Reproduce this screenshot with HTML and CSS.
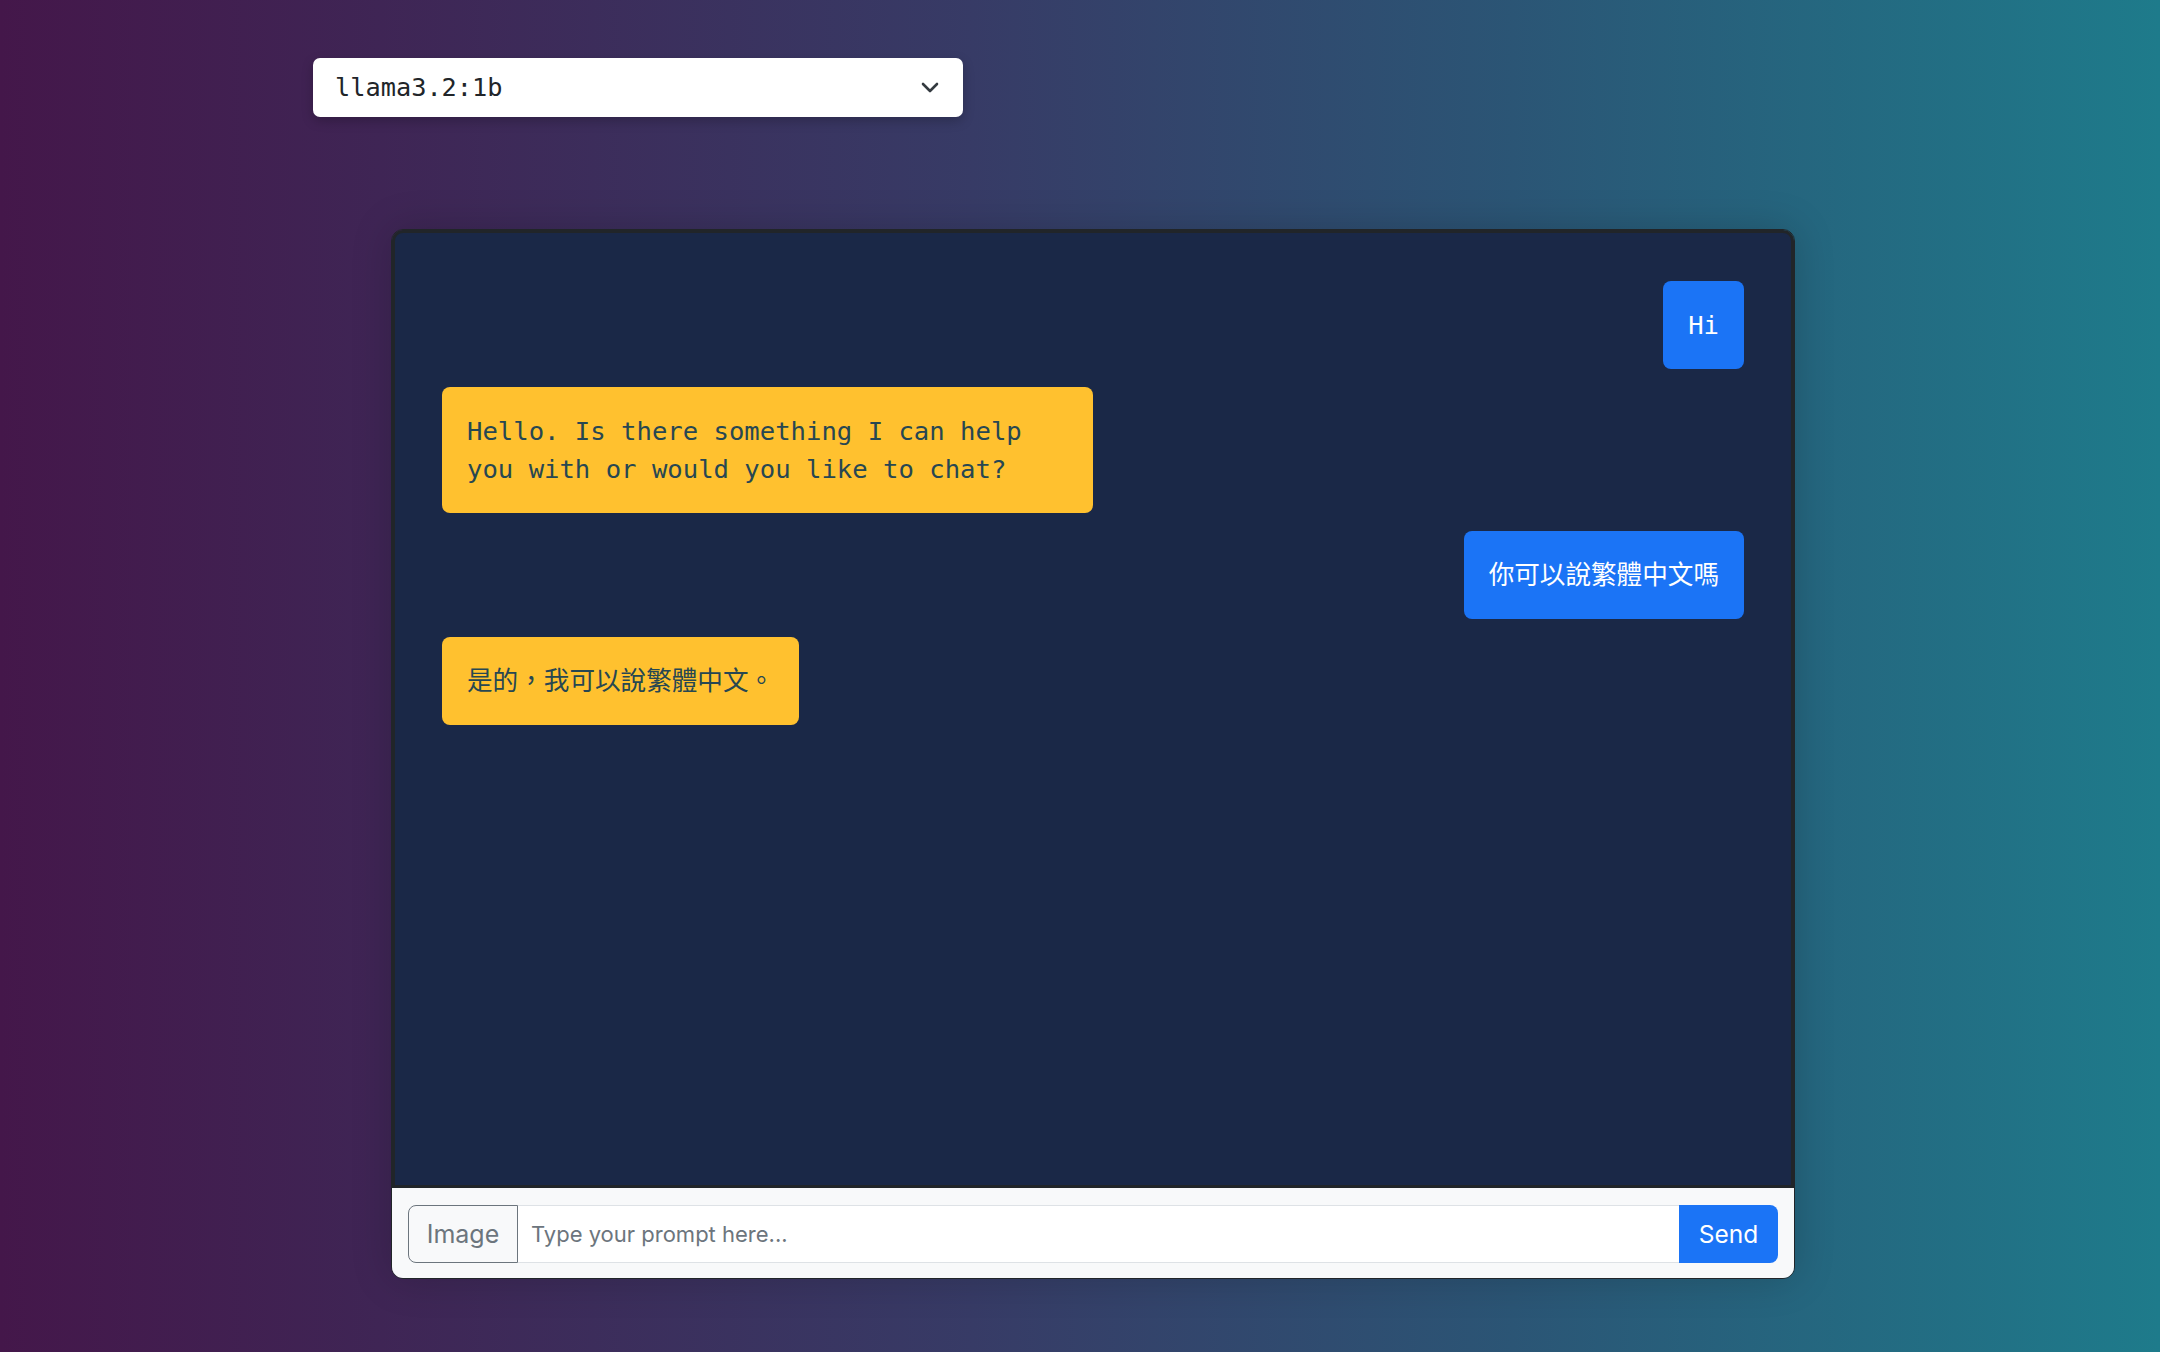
FILE: index.html
```html
<!DOCTYPE html>
<html lang="zh-Hant">
<head>
<meta charset="utf-8">
<title>Chat</title>
<link rel="stylesheet" href="styles.css">
</head>
<body>
<div class="page">
  <div class="model-select">
    <span class="model-name">llama3.2:1b</span>
    <svg class="chevron" width="18" height="12" viewBox="0 0 18 12" aria-hidden="true">
      <path d="M2 2 L9 9 L16 2" fill="none" stroke="#343a40" stroke-width="2.6" stroke-linecap="round" stroke-linejoin="round"/>
    </svg>
  </div>
  <div class="chat-card">
    <div class="messages">
      <div class="msg user">Hi</div>
      <div class="msg bot">Hello. Is there something I can help you with or would you like to chat?</div>
      <div class="msg user">你可以說繁體中文嗎</div>
      <div class="msg bot">是的，我可以說繁體中文。</div>
    </div>
    <div class="composer">
      <div class="input-group">
        <button class="btn-image" type="button">Image</button>
        <input class="prompt" type="text" placeholder="Type your prompt here...">
        <button class="btn-send" type="button">Send</button>
      </div>
    </div>
  </div>
</div>
</body>
</html>
```
FILE: styles.css
```css
* { box-sizing: border-box; }
html, body { margin: 0; padding: 0; }
body {
  min-height: 100vh;
  background: linear-gradient(to right, #44174a 0%, #373b66 45%, #2b5575 70%, #1e7b8b 100%);
  font-family: "Inter", "Noto Sans", sans-serif;
}
.page {
  padding: 58px 0 0 313px;
}
.model-select {
  width: 650px;
  height: 59px;
  background: #ffffff;
  border-radius: 7px;
  display: flex;
  align-items: center;
  justify-content: space-between;
  padding: 0 24px 0 22px;
  box-shadow: 0 4px 12px rgba(0, 0, 0, 0.22);
}
.model-name {
  font-family: "DejaVu Sans Mono", monospace;
  font-size: 25.3px;
  color: #212529;
}
.chevron { display: block; }
.chat-card {
  margin: 112px 0 0 78px;
  width: 1404px;
  height: 1050px;
  border-radius: 12px;
  border: 1px solid #212529;
  overflow: hidden;
  display: flex;
  flex-direction: column;
  box-shadow: 0 0 40px rgba(0, 0, 0, 0.18);
}
.messages {
  flex: 1;
  background: #1a2847;
  border: 3px solid #212529;
  border-radius: 11px 11px 0 0;
  padding: 48px 47px;
  display: flex;
  flex-direction: column;
  gap: 18px;
}
.msg {
  max-width: 50%;
  padding: 25px 25px;
  border-radius: 8px;
  font-family: "DejaVu Sans Mono", "Noto Sans CJK TC", monospace;
  font-size: 25.6px;
  line-height: 38px;
}
.msg.user {
  align-self: flex-end;
  background: #1b74f6;
  color: #ffffff;
}
.msg.bot {
  align-self: flex-start;
  background: #ffc12f;
  color: #274752;
}
.composer {
  background: #f8f9fa;
  padding: 17px 16px 15px 16px;
}
.input-group {
  display: flex;
  height: 58px;
}
.btn-image {
  width: 110px;
  border: 1px solid #6c757d;
  border-radius: 8px 0 0 8px;
  background: #f8f9fa;
  color: #6c757d;
  font-family: "Inter", "Noto Sans", sans-serif;
  font-size: 25px;
  padding: 0;
}
.prompt {
  flex: 1;
  border: 1px solid #dee2e6;
  border-left: none;
  border-right: none;
  background: #ffffff;
  font-family: "Inter", "Noto Sans", sans-serif;
  font-size: 22px;
  padding: 0 13px;
  color: #212529;
  outline: none;
}
.prompt::placeholder { color: #6c757d; }
.btn-send {
  width: 99px;
  border: none;
  border-radius: 0 8px 8px 0;
  background: #1b74f6;
  color: #ffffff;
  font-family: "Inter", "Noto Sans", sans-serif;
  font-size: 24.5px;
  padding: 0;
}
```
